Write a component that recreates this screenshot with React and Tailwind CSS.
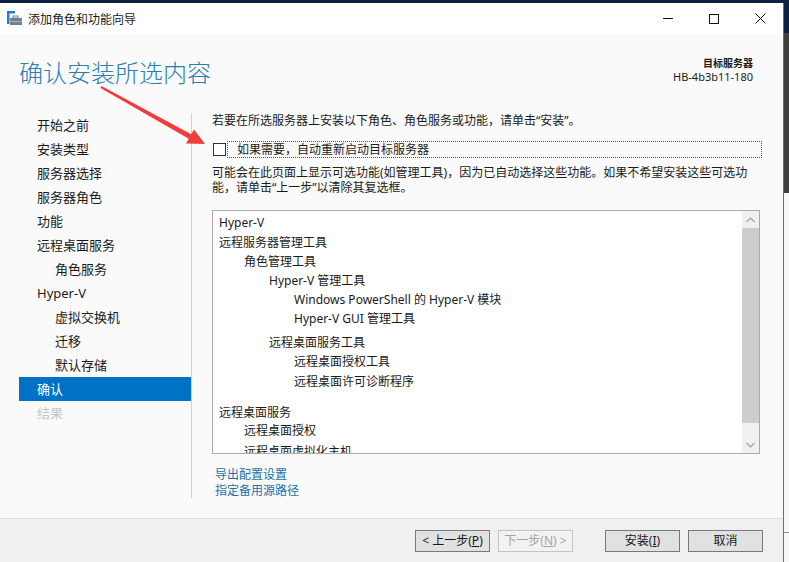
import React from "react";

const navItems = [
  { t: "开始之前", i: 0 },
  { t: "安装类型", i: 0 },
  { t: "服务器选择", i: 0 },
  { t: "服务器角色", i: 0 },
  { t: "功能", i: 0 },
  { t: "远程桌面服务", i: 0 },
  { t: "角色服务", i: 1 },
  { t: "Hyper-V", i: 0 },
  { t: "虚拟交换机", i: 1 },
  { t: "迁移", i: 1 },
  { t: "默认存储", i: 1 },
  { t: "确认", i: 0, sel: true },
  { t: "结果", i: 0, dis: true },
];

const listItems = [
  { t: "Hyper-V", pl: "pl-[6px]", mt: "mt-0" },
  { t: "远程服务器管理工具", pl: "pl-[6px]", mt: "mt-px" },
  { t: "角色管理工具", pl: "pl-[31px]", mt: "mt-0" },
  { t: "Hyper-V 管理工具", pl: "pl-[56px]", mt: "mt-0" },
  { t: "Windows PowerShell 的 Hyper-V 模块", pl: "pl-[81px]", mt: "mt-0" },
  { t: "Hyper-V GUI 管理工具", pl: "pl-[81px]", mt: "mt-0" },
  { t: "远程桌面服务工具", pl: "pl-[56px]", mt: "mt-[5px]" },
  { t: "远程桌面授权工具", pl: "pl-[81px]", mt: "mt-0" },
  { t: "远程桌面许可诊断程序", pl: "pl-[81px]", mt: "mt-px" },
  { t: "远程桌面服务", pl: "pl-[6px]", mt: "mt-[12px]" },
  { t: "远程桌面授权", pl: "pl-[31px]", mt: "-mt-px" },
  { t: "远程桌面虚拟化主机", pl: "pl-[31px]", mt: "mt-[2px]" },
];

function Btn({ children, disabled }) {
  return (
    <div
      className={
        "w-[75px] h-[22px] flex items-center justify-center text-[12px] leading-[16px] border " +
        (disabled
          ? "border-[#c4c4c4] bg-[#f2f2f2] text-[#a3a3a3]"
          : "border-[#7a7a7a] bg-[#e1e1e1] text-[#1a1a1a]")
      }
    >
      {children}
    </div>
  );
}

export default function App() {
  return (
    <div className="relative w-[789px] h-[562px] overflow-hidden bg-[#0d2240] font-['Noto_Sans','Noto_Sans_CJK_SC',sans-serif] text-[#1a1a1a]">
      <div className="h-[3px]" />
      <div className="flex h-[559px]">
        {/* window */}
        <div className="w-[783px] flex flex-col">
          {/* title bar */}
          <div className="h-[31px] bg-white flex items-center">
            <svg width="16" height="16" viewBox="0 0 16 16" className="ml-[7px] mt-[1px]">
              <rect x="0" y="0" width="8" height="2.5" fill="#1f7fd6" />
              <rect x="0" y="0" width="2.5" height="13" fill="#1f7fd6" />
              <rect x="6" y="5" width="5" height="2" fill="none" stroke="#6f7f8f" strokeWidth="1" />
              <rect x="3" y="7" width="12" height="7" fill="#71808f" />
              <rect x="3" y="10" width="12" height="1" fill="#a9b4bf" />
            </svg>
            <div className="ml-[5px] text-[12px] leading-[16px] mt-[2px]">添加角色和功能向导</div>
            <div className="flex-1" />
            <div className="w-[46px] h-[31px] flex items-center justify-center">
              <div className="w-[10px] h-px bg-[#111]" />
            </div>
            <div className="w-[46px] h-[31px] flex items-center justify-center">
              <div className="w-[10px] h-[10px] border border-[#111]" />
            </div>
            <div className="w-[46px] h-[31px] flex items-center justify-center">
              <svg width="11" height="11" viewBox="0 0 11 11">
                <path d="M0.5 0.5 L10.5 10.5 M10.5 0.5 L0.5 10.5" stroke="#111" strokeWidth="1" />
              </svg>
            </div>
          </div>

          {/* body */}
          <div className="h-[484px] bg-[#fafafa] flex flex-col">
            <div className="h-[79px] flex justify-between pl-[19px] pr-[30px]">
              <div className="pt-[22px] text-[24px] leading-[32px] text-[#2a7db5] font-['Noto_Sans_CJK_SC',sans-serif] font-light">
                确认安装所选内容
              </div>
              <div className="pt-[23px] text-right text-[10px] leading-[13px]">
                <div className="font-semibold">目标服务器</div>
                <div className="text-[11px]">HB-4b3b11-180</div>
              </div>
            </div>

            <div className="flex flex-1">
              {/* nav */}
              <div className="w-[191px] pl-[19px]">
                {navItems.map((n) => (
                  <div
                    key={n.t}
                    className={
                      "h-[24px] flex items-center text-[13px] leading-[18px] " +
                      (n.i ? "pl-[36px] " : "pl-[18px] ") +
                      (n.sel ? "bg-[#0072c6] text-white " : "") +
                      (n.dis ? "text-[#c6c6c6] " : "")
                    }
                  >
                    {n.t}
                  </div>
                ))}
              </div>
              {/* divider */}
              <div className="w-px h-[385px] bg-[#cfcfcf]" />

              {/* content */}
              <div className="flex-1 pl-[20px] pr-[21px] text-[12px]">
                <div className="leading-[16px] whitespace-nowrap">
                  若要在所选服务器上安装以下角色、角色服务或功能，请单击“安装”。
                </div>
                <div className="mt-[12px] h-[17px] flex items-center">
                  <div className="ml-px w-[13px] h-[13px] border border-[#333] bg-white" />
                  <div className="ml-px flex-1 h-[17px] border border-dotted border-[#555] flex items-center pl-[9px] leading-[16px]">
                    如果需要，自动重新启动目标服务器
                  </div>
                </div>
                <div className="mt-[7px] leading-[15px] whitespace-nowrap">
                  <div>可能会在此页面上显示可选功能(如管理工具)，因为已自动选择这些功能。如果不希望安装这些可选功</div>
                  <div>能，请单击“上一步”以清除其复选框。</div>
                </div>

                {/* list box */}
                <div className="mt-[15px] w-[548px] h-[244px] border border-[#ababab] bg-white flex">
                  <div className="flex-1 overflow-hidden pt-[2px]">
                    {listItems.map((l) => (
                      <div key={l.t} className={"h-[19px] leading-[19px] whitespace-nowrap " + l.pl + " " + l.mt}>
                        {l.t}
                      </div>
                    ))}
                  </div>
                  <div className="w-[17px] bg-[#f0f0f0] flex flex-col">
                    <div className="h-[17px] flex items-center justify-center">
                      <svg width="9" height="6" viewBox="0 0 9 6">
                        <path d="M0.5 5 L4.5 1 L8.5 5" fill="none" stroke="#a0a0a0" strokeWidth="1.2" />
                      </svg>
                    </div>
                    <div className="h-[195px] bg-[#cdcdcd]" />
                    <div className="flex-1" />
                    <div className="h-[17px] flex items-center justify-center">
                      <svg width="9" height="6" viewBox="0 0 9 6">
                        <path d="M0.5 1 L4.5 5 L8.5 1" fill="none" stroke="#a0a0a0" strokeWidth="1.2" />
                      </svg>
                    </div>
                  </div>
                </div>

                <div className="mt-[13px] pl-[3px] leading-[16px] text-[#1d6fa5]">
                  <div>导出配置设置</div>
                  <div>指定备用源路径</div>
                </div>
              </div>
            </div>
          </div>

          {/* footer */}
          <div className="h-[44px] bg-[#f0f0f0] border-t border-[#dfdfdf] flex justify-end items-start pt-[11px] pr-[20px]">
            <Btn>
              &lt; 上一步(<span className="underline">P</span>)
            </Btn>
            <div className="w-[8px]" />
            <Btn disabled>
              下一步(<span className="underline">N</span>) &gt;
            </Btn>
            <div className="w-[32px]" />
            <Btn>
              安装(<span className="underline">I</span>)
            </Btn>
            <div className="w-[8px]" />
            <Btn>取消</Btn>
          </div>
        </div>

        {/* window edge + background strip */}
        <div className="w-px bg-[#6e6e6e]" />
        <div className="flex-1 flex flex-col">
          <div className="h-[30px] bg-[#0d2240]" />
          <div className="h-[160px] bg-[#3f3f3f]" />
          <div className="h-[340px] bg-[#f7f7f7] border-b border-[#8a8a8a]" />
          <div className="flex-1 bg-[#f7f7f7]" />
        </div>
      </div>

      {/* red annotation arrow */}
      <svg className="absolute left-0 top-0 pointer-events-none" width="789" height="562">
        <polygon
          points="101.5,86.1 191.2,134.3 194,129.5 205,144 186,143.5 188.8,138.7 100.5,87.9"
          fill="#f23b3b"
        />
      </svg>
    </div>
  );
}
